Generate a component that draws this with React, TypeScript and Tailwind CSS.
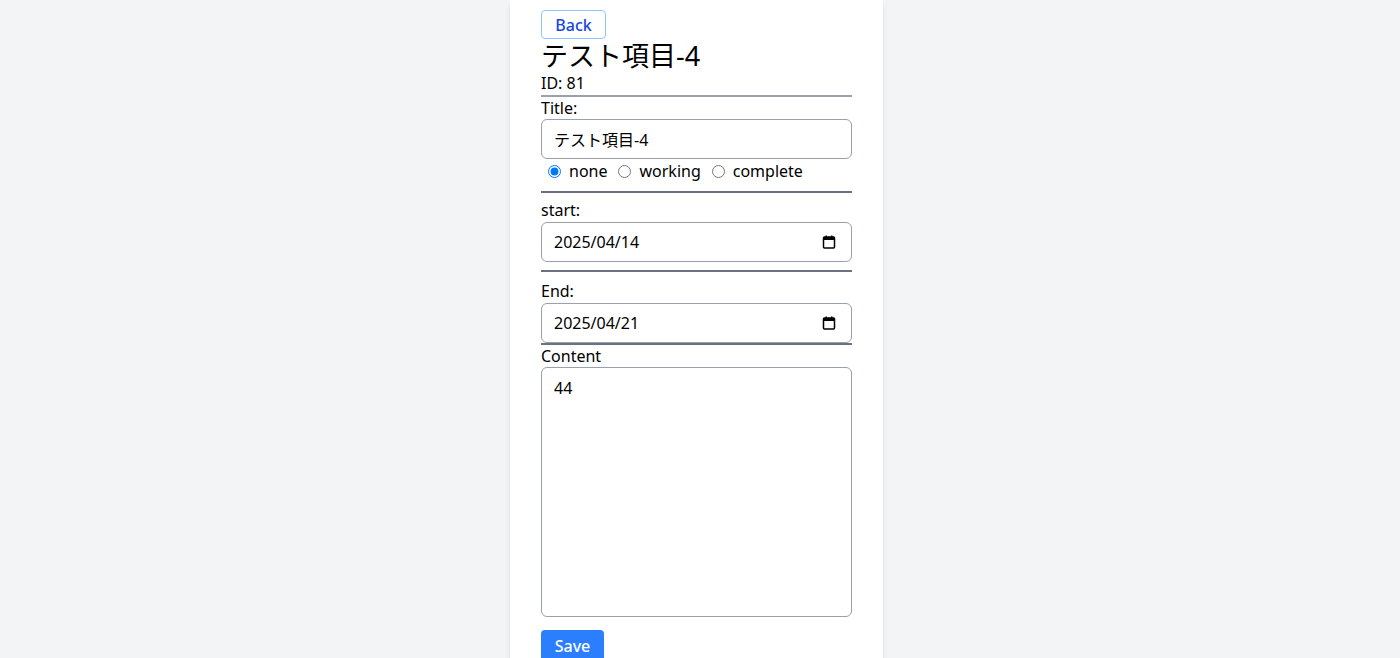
import { useState } from "react";

const font = { fontFamily: '"Noto Sans", "Noto Sans CJK JP", sans-serif' };

const CalendarIcon = () => (
  <svg width="16" height="16" viewBox="0 0 16 16" className="text-black">
    <rect x="2.5" y="3" width="11" height="11" rx="1" fill="none" stroke="currentColor" strokeWidth="1.5" />
    <rect x="2.5" y="3" width="11" height="3" fill="currentColor" />
    <rect x="4.5" y="1.5" width="1.5" height="2" fill="currentColor" />
    <rect x="10" y="1.5" width="1.5" height="2" fill="currentColor" />
  </svg>
);

const DateField = ({ value }: { value: string }) => (
  <div className="flex h-[40px] items-center justify-between rounded-md border border-gray-400 bg-white pl-3 pr-[14px] text-base text-black">
    <span>{value}</span>
    <CalendarIcon />
  </div>
);

export default function App() {
  const [status, setStatus] = useState("none");
  const [title, setTitle] = useState("テスト項目-4");
  const [content, setContent] = useState("44");

  return (
    <div className="flex min-h-screen justify-center bg-gray-100 pr-[7px]" style={font}>
      <div className="min-h-screen w-[373px] bg-white px-[31px] pt-[10px] shadow-md">
        <button className="h-[29px] w-[65px] rounded border border-blue-300 text-base font-medium text-blue-700">
          Back
        </button>
        <h1 className="pt-[2px] text-[27px] leading-[30px] text-black">テスト項目-4</h1>
        <p className="text-base leading-6 text-black">ID: 81</p>
        <hr className="border-t-2 border-gray-400" />

        {/* title + status */}
        <label className="block text-base leading-[22px] text-black">Title:</label>
        <input
          className="block h-[40px] w-full rounded-md border border-gray-400 px-3 text-base text-black outline-none"
          value={title}
          onChange={(e) => setTitle(e.target.value)}
        />
        <div className="flex h-6 items-center pl-[7px] text-base text-black">
          {["none", "working", "complete"].map((s) => (
            <label key={s} className="mr-[11px] flex items-center gap-[8px]">
              <input
                type="radio"
                name="status"
                className="m-0 h-[13px] w-[13px]"
                checked={status === s}
                onChange={() => setStatus(s)}
              />
              {s}
            </label>
          ))}
        </div>
        <hr className="mt-2 border-t-2 border-gray-500" />

        {/* start */}
        <label className="mt-[5px] block text-base leading-6 text-black">start:</label>
        <DateField value="2025/04/14" />
        <hr className="mt-2 border-t-2 border-gray-500" />

        {/* end */}
        <label className="mt-[7px] block text-base leading-6 text-black">End:</label>
        <DateField value="2025/04/21" />
        <hr className="border-t-2 border-gray-500" />

        {/* content */}
        <label className="block text-base leading-[22px] text-black">Content</label>
        <textarea
          className="block h-[250px] w-full resize-none rounded-md border border-gray-400 px-3 py-2 text-base leading-6 text-black outline-none"
          value={content}
          onChange={(e) => setContent(e.target.value)}
        />
        <button className="mt-[13px] h-[32px] w-[63px] rounded bg-blue-500 text-base font-medium text-white">
          Save
        </button>
      </div>
    </div>
  );
}
